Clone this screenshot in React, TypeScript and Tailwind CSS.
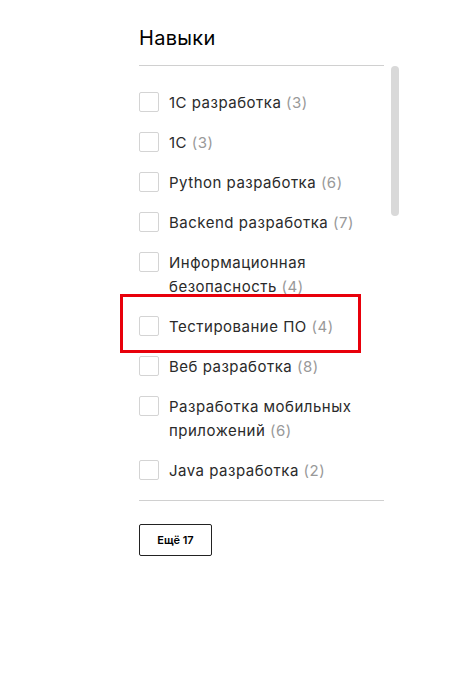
import React from "react";

const items: { label: string; count: number }[] = [
  { label: "1С разработка", count: 3 },
  { label: "1С", count: 3 },
  { label: "Python разработка", count: 6 },
  { label: "Backend разработка", count: 7 },
  { label: "Информационная безопасность", count: 4 },
  { label: "Тестирование ПО", count: 4 },
  { label: "Веб разработка", count: 8 },
  { label: "Разработка мобильных приложений", count: 6 },
  { label: "Java разработка", count: 2 },
];

export default function App() {
  return (
    <div
      className="relative w-[465px] h-[683px] bg-white"
      style={{ fontFamily: "Inter, 'Noto Sans', sans-serif" }}
    >
      <div className="pl-[139px] pt-[24px] w-[400px]">
        <h2 className="text-[20px] leading-[28px] font-normal text-black h-[41px] tracking-[0.3px]">Навыки</h2>
        <div className="relative w-[245px]">
          <div className="border-t border-[#d0d0d0]" />
          <div className="flex flex-col gap-[16px] pt-[25px] pb-[17px]">
            {items.map((it) => (
              <label key={it.label} className="flex items-start gap-[10px]">
                <span className="mt-[1px] w-[20px] h-[20px] shrink-0 border border-[#d4d4d4] rounded-[2px] bg-white" />
                <span className="text-[15px] leading-[24px] text-[#2a2a2a] w-[200px] tracking-[0.5px]">
                  {it.label} <span className="text-[#999]">({it.count})</span>
                </span>
              </label>
            ))}
          </div>
          <div className="border-t border-[#d0d0d0]" />
          <div className="absolute left-[252px] top-[1px] w-[8px] h-[150px] rounded-full bg-[#d9d9d9]" />
        </div>
        <button className="mt-[23px] w-[73px] h-[32px] border border-[#222] rounded-[2px] text-[11px] font-semibold text-black">
          Ещё 17
        </button>
      </div>
      <div className="absolute left-[120px] top-[294px] w-[241px] h-[59px] border-[3px] border-[#e8000b]" />
    </div>
  );
}
